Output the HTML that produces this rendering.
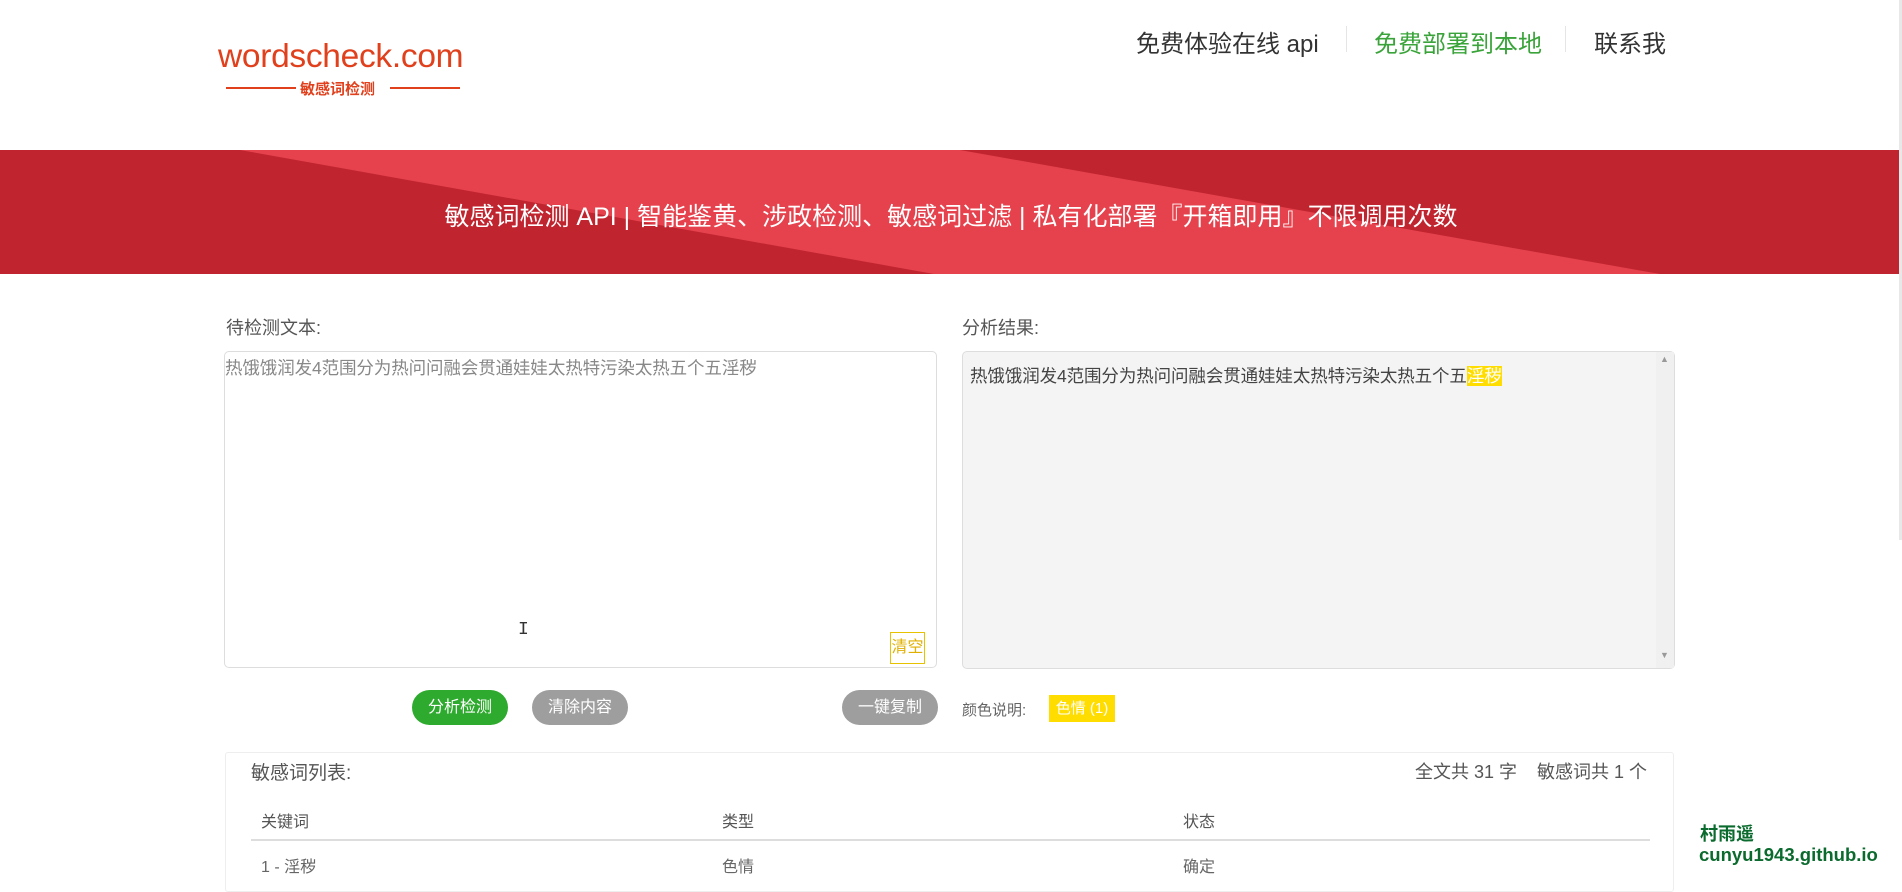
<!DOCTYPE html>
<html><head><meta charset="utf-8"><style>
*{margin:0;padding:0;box-sizing:border-box}
body{width:1902px;height:869px;overflow:hidden;background:#fff;font-family:"Liberation Sans","Noto Sans CJK SC",sans-serif;position:relative;color:#555}
.a{position:absolute;white-space:nowrap}
.btn{position:absolute;height:35px;border-radius:18px;color:#fff;font-size:16px;line-height:35px;text-align:center}
</style></head><body>
<div class="a" style="left:218px;top:38px;font-size:33.5px;color:#e0401c;letter-spacing:-0.3px">wordscheck.com</div>
<div class="a" style="left:226px;top:87px;width:70px;height:2px;background:#e0401c"></div>
<div class="a" style="left:300px;top:78px;font-size:15px;color:#e0401c;font-weight:bold">敏感词检测</div>
<div class="a" style="left:390px;top:87px;width:70px;height:2px;background:#e0401c"></div>

<div class="a" style="left:1136px;top:24px;font-size:24px;color:#333">免费体验在线 api</div>
<div class="a" style="left:1346px;top:26px;width:1px;height:26px;background:#e5e5e5"></div>
<div class="a" style="left:1374px;top:24px;font-size:24px;color:#3aa43a">免费部署到本地</div>
<div class="a" style="left:1565px;top:26px;width:1px;height:26px;background:#e5e5e5"></div>
<div class="a" style="left:1594px;top:24px;font-size:24px;color:#333">联系我</div>

<svg class="a" style="left:0;top:150px" width="1902" height="124">
<rect width="1902" height="124" fill="#c0242f"/>
<polygon points="240,0 960,0 1660,124 934,124" fill="#e5424d"/>
</svg>
<div class="a" style="left:0;width:1902px;top:197px;text-align:center;font-size:25px;color:#fff">敏感词检测 API | 智能鉴黄、涉政检测、敏感词过滤 | 私有化部署『开箱即用』不限调用次数</div>

<div class="a" style="left:226px;top:314px;font-size:18px;color:#555">待检测文本:</div>
<div class="a" style="left:962px;top:314px;font-size:18px;color:#555">分析结果:</div>

<div class="a" style="left:224px;top:351px;width:713px;height:317px;border:1px solid #ddd;border-radius:5px"></div>
<div class="a" style="left:225px;top:355px;font-size:17.5px;color:#888;letter-spacing:-0.1px">热饿饿润发4范围分为热问问融会贯通娃娃太热特污染太热五个五淫秽</div>
<div class="a" style="left:890px;top:632px;width:35px;height:32px;border:1px solid #e6c200;color:#e0b000;font-size:16px;line-height:30px;text-align:center">清空</div>
<div class="a" style="left:518px;top:620px;font-size:18px;color:#333;font-family:'Liberation Mono',monospace">I</div>

<div class="a" style="left:962px;top:351px;width:713px;height:318px;border:1px solid #ddd;border-radius:5px;background:#f4f4f4"></div>
<div class="a" style="left:1656px;top:352px;width:18px;height:316px;background:#f0f0f0"></div>
<div class="a" style="left:1660px;top:354px;font-size:9px;color:#999">▲</div>
<div class="a" style="left:1660px;top:650px;font-size:9px;color:#999">▼</div>
<div class="a" style="left:970px;top:363px;font-size:17.5px;color:#444;letter-spacing:-0.1px">热饿饿润发4范围分为热问问融会贯通娃娃太热特污染太热五个五<span style="background:#ffdd00;color:#fff">淫秽</span></div>

<div class="btn" style="left:412px;top:690px;width:96px;background:#2eaa2e">分析检测</div>
<div class="btn" style="left:532px;top:690px;width:96px;background:#9e9e9e">清除内容</div>
<div class="btn" style="left:842px;top:690px;width:96px;background:#9e9e9e">一键复制</div>
<div class="a" style="left:962px;top:699px;font-size:15px;color:#666">颜色说明:</div>
<div class="a" style="left:1049px;top:695px;width:66px;height:27px;background:#ffdd00;color:#fff;font-size:15px;line-height:27px;text-align:center">色情 (1)</div>

<div class="a" style="left:225px;top:752px;width:1449px;height:140px;border:1px solid #eee;border-radius:3px"></div>
<div class="a" style="left:251px;top:758px;font-size:19px;color:#555">敏感词列表:</div>
<div class="a" style="left:1415px;top:758px;font-size:18px;color:#555">全文共 31 字&nbsp;&nbsp;&nbsp;&nbsp;敏感词共 1 个</div>
<div class="a" style="left:261px;top:808px;font-size:16px;color:#555">关键词</div>
<div class="a" style="left:722px;top:808px;font-size:16px;color:#555">类型</div>
<div class="a" style="left:1183px;top:808px;font-size:16px;color:#555">状态</div>
<div class="a" style="left:251px;top:839px;width:1399px;height:2px;background:#ddd"></div>
<div class="a" style="left:261px;top:853px;font-size:16px;color:#666">1 - 淫秽</div>
<div class="a" style="left:722px;top:853px;font-size:16px;color:#666">色情</div>
<div class="a" style="left:1183px;top:853px;font-size:16px;color:#666">确定</div>

<div class="a" style="left:1899px;top:0;width:3px;height:540px;background:#e8e8e8"></div>
<div class="a" style="left:1700px;top:820px;font-size:18px;color:#0b6b2e;font-weight:bold">村雨遥</div>
<div class="a" style="left:1699px;top:844px;font-size:18.5px;color:#0b6b2e;font-weight:bold">cunyu1943.github.io</div>
</body></html>
